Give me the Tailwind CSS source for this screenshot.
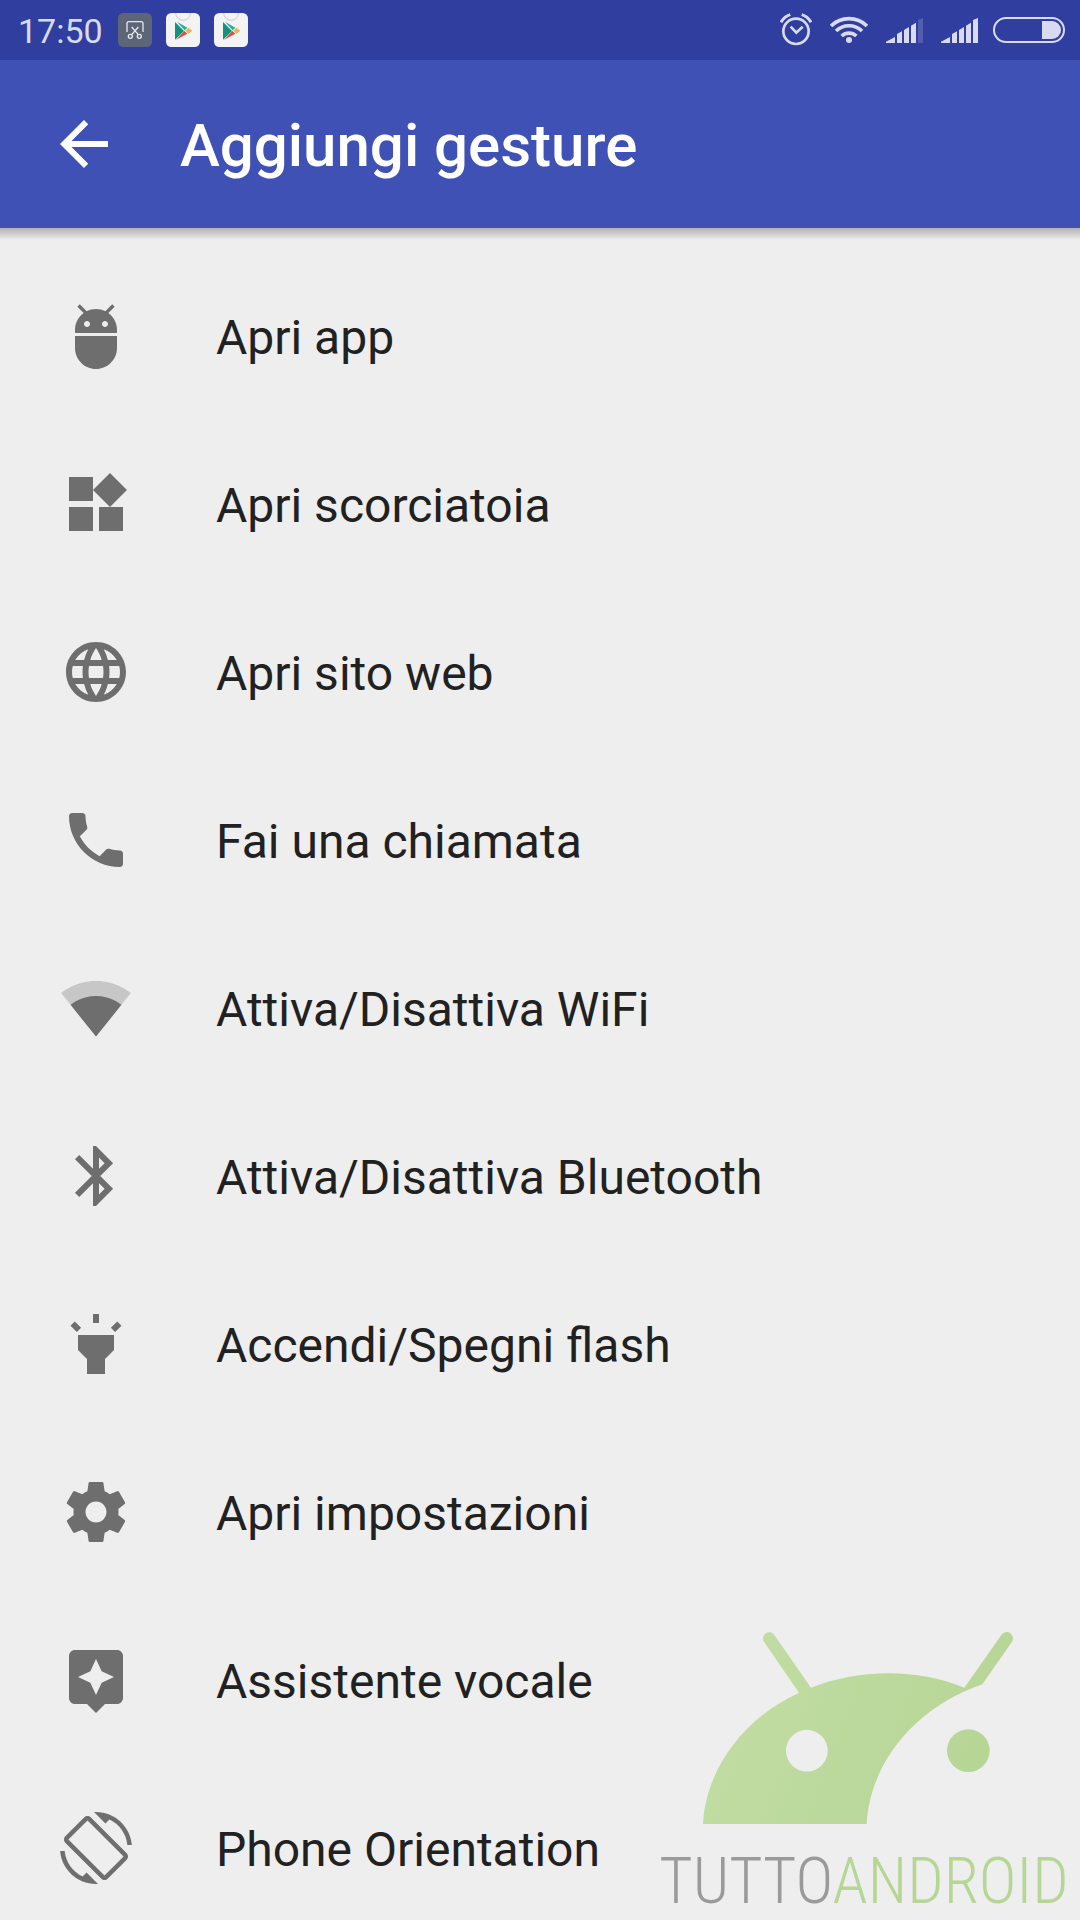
<!doctype html>
<html lang="it" class="h-full">
<head>
  <meta charset="utf-8" />
  <meta name="viewport" content="width=device-width, initial-scale=1" />
  <title>Aggiungi gesture</title>
  <script src="https://cdn.jsdelivr.net/npm/@tailwindcss/browser@4"></script>
</head>
<body class="relative h-screen overflow-hidden bg-[#eeeeee] font-['Roboto',sans-serif] flex flex-col">

  <!-- Status bar -->
  <div class="h-[60px] shrink-0 bg-[#303f9f] text-[#d8dbf0] flex items-center justify-between pl-[18px] pr-[15px]">
    <div class="flex items-center gap-[14px]">
      <span class="text-[34px] leading-[40px] pt-[2px] pr-px">17:50</span>
      <svg class="size-[34px]" viewBox="0 0 102 102" aria-hidden="true">
        <rect width="102" height="102" rx="16" fill="#5d6579" />
        <g fill="none" stroke="#e8e8ea" stroke-width="4">
          <path d="M27 57V32q0-6 6-6h36q6 0 6 6v25M41 42l20 23M61 42L41 65" />
          <circle cx="37" cy="70" r="6" />
          <circle cx="64" cy="70" r="6" />
        </g>
      </svg>
      <svg class="size-[34px]" viewBox="0 0 102 102" aria-hidden="true">
        <rect width="102" height="102" rx="16" fill="#f3f3f3" />
        <path d="M29 0a22 22 0 0 0 44 0" fill="none" stroke="#c9cbd2" stroke-width="3" />
        <path d="M27 27v53l27-26z" fill="#12937c" />
        <path d="M33 26l31 18-8 8z" fill="#14b89a" />
        <path d="M30 80l34-18-9-8z" fill="#e9473f" />
        <path d="M58 53l9-9 12 9-12 9z" fill="#f0b153" />
      </svg>
      <svg class="size-[34px]" viewBox="0 0 102 102" aria-hidden="true">
        <rect width="102" height="102" rx="16" fill="#f3f3f3" />
        <path d="M29 0a22 22 0 0 0 44 0" fill="none" stroke="#c9cbd2" stroke-width="3" />
        <path d="M27 27v53l27-26z" fill="#12937c" />
        <path d="M33 26l31 18-8 8z" fill="#14b89a" />
        <path d="M30 80l34-18-9-8z" fill="#e9473f" />
        <path d="M58 53l9-9 12 9-12 9z" fill="#f0b153" />
      </svg>
    </div>
    <div class="flex items-center gap-[18px]">
      <svg class="w-8 h-[34px]" viewBox="0 0 96 102" fill="none" stroke="currentColor" aria-hidden="true">
        <circle cx="48" cy="55" r="38" stroke-width="8" />
        <path d="M32 41l17 18 19-18" stroke-width="8" />
        <path d="M3 28Q13 10 31 5M93 28Q83 10 65 5" stroke-width="9" />
      </svg>
      <svg class="w-[38px] h-[34px]" viewBox="0 0 114 102" fill="none" stroke="currentColor" stroke-width="11" aria-hidden="true">
        <path d="M3 39a77 77 0 0 1 108 0M18 54a56 56 0 0 1 78 0M35 69a32 32 0 0 1 44 0" />
        <circle cx="57" cy="81" r="9" fill="currentColor" stroke="none" />
      </svg>
      <svg class="w-[37px] h-[34px]" viewBox="0 0 111 102" fill="currentColor" aria-hidden="true">
        <path d="M0 90v-4l27-14v18zM33 90V63l15-8v35zM54 90V51l15-9v48zM75 90V38l15-9v61z" />
        <path d="M96 90V21l15-6v75z" opacity=".2" />
      </svg>
      <svg class="w-[37px] h-[34px]" viewBox="0 0 111 102" fill="currentColor" aria-hidden="true">
        <path d="M0 90v-4l27-14v18zM33 90V63l15-8v35zM54 90V51l15-9v48zM75 90V38l15-9v61zM96 90V21l15-6v75z" />
      </svg>
      <svg class="-ml-[3px] w-[72px] h-[26px]" viewBox="0 0 216 78" aria-hidden="true">
        <rect x="3" y="3" width="210" height="72" rx="36" fill="none" stroke="currentColor" stroke-width="6" />
        <path d="M147 12h30a27 27 0 0 1 0 54h-30z" fill="currentColor" />
      </svg>
    </div>
  </div>

  <!-- App bar -->
  <header class="h-[168px] shrink-0 bg-[#3f51b5] text-white flex items-center gap-[60px] pl-12">
    <button type="button" aria-label="Indietro">
      <svg class="size-[72px]" viewBox="0 0 24 24" fill="currentColor"><path d="M20 11H7.83l5.59-5.59L12 4l-8 8 8 8 1.41-1.41L7.83 13H20v-2z" /></svg>
    </button>
    <h1 class="text-[60px] leading-[72px] font-medium pt-1">Aggiungi gesture</h1>
  </header>
  <div class="h-3 shrink-0 bg-linear-to-b from-[#b2b2b2] to-[#eeeeee]"></div>

  <!-- Actions -->
  <ul class="pt-3 text-[48px] leading-[56px] text-[#212121]">
    <li>
      <button type="button" class="flex w-full h-[168px] items-center gap-[84px] px-[60px] text-left">
        <svg class="size-[72px] fill-[#6e6e6e]" viewBox="0 0 24 24"><path d="M5 16c0 3.87 3.13 7 7 7s7-3.13 7-7v-4H5v4zM16.12 4.37l2.1-2.1-.82-.83-2.3 2.31C14.16 3.28 13.12 3 12 3s-2.16.28-3.09.75L6.6 1.44l-.82.83 2.1 2.1C6.14 5.64 5 7.68 5 10v1h14v-1c0-2.32-1.14-4.36-2.88-5.63zM9 9c-.55 0-1-.45-1-1s.45-1 1-1 1 .45 1 1-.45 1-1 1zm6 0c-.55 0-1-.45-1-1s.45-1 1-1 1 .45 1 1-.45 1-1 1z" /></svg>
        <span class="pt-1">Apri app</span>
      </button>
    </li>
    <li>
      <button type="button" class="flex w-full h-[168px] items-center gap-[84px] px-[60px] text-left">
        <svg class="size-[72px] fill-[#6e6e6e]" viewBox="0 0 24 24"><path d="M13 13v8h8v-8h-8zM3 21h8v-8H3v8zM3 3v8h8V3H3zm13.66-1.31L11 7.34 16.66 13l5.66-5.66-5.66-5.65z" /></svg>
        <span class="pt-1">Apri scorciatoia</span>
      </button>
    </li>
    <li>
      <button type="button" class="flex w-full h-[168px] items-center gap-[84px] px-[60px] text-left">
        <svg class="size-[72px] fill-[#6e6e6e]" viewBox="0 0 24 24"><path d="M11.99 2C6.47 2 2 6.48 2 12s4.47 10 9.99 10C17.52 22 22 17.52 22 12S17.52 2 11.99 2zm6.93 6h-2.95c-.32-1.25-.78-2.45-1.38-3.56 1.84.63 3.37 1.91 4.33 3.56zM12 4.04c.83 1.2 1.48 2.53 1.91 3.96h-3.82c.43-1.43 1.08-2.76 1.91-3.96zM4.26 14C4.1 13.36 4 12.69 4 12s.1-1.36.26-2h3.38c-.08.66-.14 1.32-.14 2 0 .68.06 1.34.14 2H4.26zm.82 2h2.95c.32 1.25.78 2.45 1.38 3.56-1.84-.63-3.37-1.9-4.33-3.56zm2.95-8H5.08c.96-1.66 2.49-2.93 4.33-3.56C8.81 5.55 8.35 6.75 8.03 8zM12 19.96c-.83-1.2-1.48-2.53-1.91-3.96h3.82c-.43 1.43-1.08 2.76-1.91 3.96zM14.34 14H9.66c-.09-.66-.16-1.32-.16-2 0-.68.07-1.35.16-2h4.68c.09.65.16 1.32.16 2 0 .68-.07 1.34-.16 2zm.25 5.56c.6-1.11 1.06-2.31 1.38-3.56h2.95c-.96 1.65-2.49 2.93-4.33 3.56zM16.36 14c.08-.66.14-1.32.14-2 0-.68-.06-1.34-.14-2h3.38c.16.64.26 1.31.26 2s-.1 1.36-.26 2h-3.38z" /></svg>
        <span class="pt-1">Apri sito web</span>
      </button>
    </li>
    <li>
      <button type="button" class="flex w-full h-[168px] items-center gap-[84px] px-[60px] text-left">
        <svg class="size-[72px] fill-[#6e6e6e]" viewBox="0 0 24 24"><path d="M6.62 10.79c1.44 2.83 3.76 5.14 6.59 6.59l2.2-2.2c.27-.27.67-.36 1.02-.24 1.12.37 2.33.57 3.57.57.55 0 1 .45 1 1V20c0 .55-.45 1-1 1-9.39 0-17-7.61-17-17 0-.55.45-1 1-1h3.5c.55 0 1 .45 1 1 0 1.25.2 2.45.57 3.57.11.35.03.74-.25 1.02l-2.2 2.2z" /></svg>
        <span class="pt-1">Fai una chiamata</span>
      </button>
    </li>
    <li>
      <button type="button" class="flex w-full h-[168px] items-center gap-[84px] px-[60px] text-left">
        <svg class="size-[72px] fill-[#6e6e6e]" viewBox="0 0 24 24"><path fill-opacity=".3" d="M12.01 21.49L23.64 7c-.45-.34-4.93-4-11.64-4C5.28 3 .81 6.66.36 7l11.63 14.49.01.01.01-.01z" /><path d="M3.53 10.95l8.46 10.54.01.01.01-.01 8.46-10.54C20.04 10.62 16.81 8 12 8c-4.81 0-8.04 2.62-8.47 2.95z" /></svg>
        <span class="pt-1">Attiva/Disattiva WiFi</span>
      </button>
    </li>
    <li>
      <button type="button" class="flex w-full h-[168px] items-center gap-[84px] px-[60px] text-left">
        <svg class="size-[72px] fill-[#6e6e6e]" viewBox="0 0 24 24"><path d="M17.71 7.71L12 2h-1v7.59L6.41 5 5 6.41 10.59 12 5 17.59 6.41 19 11 14.41V22h1l5.71-5.71-4.3-4.29 4.3-4.29zM13 5.83l1.88 1.88L13 9.59V5.83zm1.88 10.46L13 18.17v-3.76l1.88 1.88z" /></svg>
        <span class="pt-1">Attiva/Disattiva Bluetooth</span>
      </button>
    </li>
    <li>
      <button type="button" class="flex w-full h-[168px] items-center gap-[84px] px-[60px] text-left">
        <svg class="size-[72px] fill-[#6e6e6e]" viewBox="0 0 24 24"><path d="M6 14l3 3v5h6v-5l3-3V9H6zm5-12h2v3h-2zM3.5 5.875L4.914 4.46l2.12 2.122L5.62 7.997zm13.46.71l2.123-2.12 1.414 1.414L18.375 8z" /></svg>
        <span class="pt-1">Accendi/Spegni flash</span>
      </button>
    </li>
    <li>
      <button type="button" class="flex w-full h-[168px] items-center gap-[84px] px-[60px] text-left">
        <svg class="size-[72px] fill-[#6e6e6e]" viewBox="0 0 24 24"><path d="M19.43 12.98c.04-.32.07-.64.07-.98s-.03-.66-.07-.98l2.11-1.65c.19-.15.24-.42.12-.64l-2-3.46c-.12-.22-.39-.3-.61-.22l-2.49 1c-.52-.4-1.08-.73-1.69-.98l-.38-2.65C14.46 2.18 14.25 2 14 2h-4c-.25 0-.46.18-.49.42l-.38 2.65c-.61.25-1.17.59-1.69.98l-2.49-1c-.23-.09-.49 0-.61.22l-2 3.46c-.13.22-.07.49.12.64l2.11 1.65c-.04.32-.07.65-.07.98s.03.66.07.98l-2.11 1.65c-.19.15-.24.42-.12.64l2 3.46c.12.22.39.3.61.22l2.49-1c.52.4 1.08.73 1.69.98l.38 2.65c.03.24.24.42.49.42h4c.25 0 .46-.18.49-.42l.38-2.65c.61-.25 1.17-.59 1.69-.98l2.49 1c.23.09.49 0 .61-.22l2-3.46c.12-.22.07-.49-.12-.64l-2.11-1.65zM12 15.5c-1.93 0-3.5-1.57-3.5-3.5s1.57-3.5 3.5-3.5 3.5 1.57 3.5 3.5-1.57 3.5-3.5 3.5z" /></svg>
        <span class="pt-1">Apri impostazioni</span>
      </button>
    </li>
    <li>
      <button type="button" class="flex w-full h-[168px] items-center gap-[84px] px-[60px] text-left">
        <svg class="size-[72px] fill-[#6e6e6e]" viewBox="0 0 24 24"><path d="M19 2H5c-1.11 0-2 .9-2 2v14c0 1.1.89 2 2 2h4l3 3 3-3h4c1.1 0 2-.9 2-2V4c0-1.1-.9-2-2-2zm-5.12 10.88L12 17l-1.88-4.12L6 11l4.12-1.88L12 5l1.88 4.12L18 11l-4.12 1.88z" /></svg>
        <span class="pt-1">Assistente vocale</span>
      </button>
    </li>
    <li>
      <button type="button" class="flex w-full h-[168px] items-center gap-[84px] px-[60px] text-left">
        <svg class="size-[72px] fill-[#6e6e6e]" viewBox="0 0 24 24"><path d="M16.48 2.52c3.27 1.55 5.61 4.72 5.97 8.48h1.5C23.44 4.84 18.29 0 12 0l-.66.03 3.81 3.81 1.33-1.32zm-6.25-.77c-.59-.59-1.54-.59-2.12 0L1.75 8.11c-.59.59-.59 1.54 0 2.12l12.02 12.02c.59.59 1.54.59 2.12 0l6.36-6.36c.59-.59.59-1.54 0-2.12L10.23 1.75zm4.6 19.44L2.81 9.17l6.36-6.36 12.02 12.02-6.36 6.36zm-7.31.29C4.25 19.94 1.91 16.76 1.55 13H.05C.56 19.16 5.71 24 12 24l.66-.03-3.81-3.81-1.33 1.32z" /></svg>
        <span class="pt-1">Phone Orientation</span>
      </button>
    </li>
  </ul>

  <!-- Watermark -->
  <div class="absolute right-0 bottom-0 w-[440px] pointer-events-none">
    <svg class="block w-full h-[220px]" viewBox="0 0 1320 660" aria-hidden="true">
      <defs>
        <linearGradient id="leaf" gradientUnits="userSpaceOnUse" x1="200" y1="200" x2="1000" y2="500">
          <stop offset="0" stop-color="#c3dda4" />
          <stop offset="1" stop-color="#b6d696" />
        </linearGradient>
      </defs>
      <g fill="url(#leaf)">
        <path fill-rule="evenodd" d="M189 642C197 482 307 326 477 248L372 95A18 18 0 0 1 403 75L513 233C660 176 830 175 973 233L1084 75A18 18 0 0 1 1116 95L1027 223C830 290 690 455 680 642zM563 422a62 62 0 1 0-125 0a62 62 0 1 0 125 0z" />
        <circle cx="985" cy="422" r="64" />
      </g>
    </svg>
    <p class="h-[90px] pt-4 pl-2 text-[64px] leading-[72px] font-light text-center whitespace-nowrap text-[#9a9a9a] font-['Roboto_Condensed','Roboto',sans-serif]">TUTTO<span class="text-[#b6d696]">ANDROID</span></p>
  </div>
</body>
</html>
